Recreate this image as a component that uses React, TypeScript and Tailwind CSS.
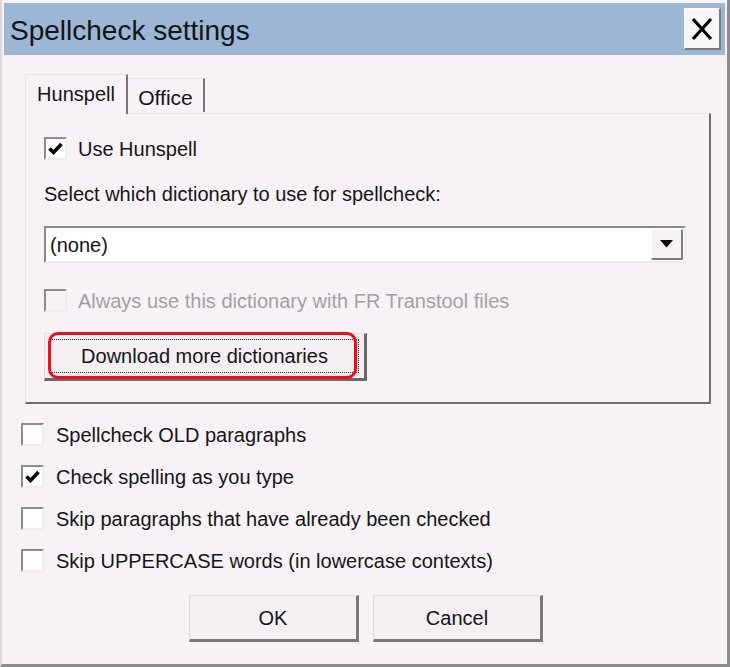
import React from 'react';

const Check: React.FC<{ checked?: boolean; disabled?: boolean }> = ({ checked, disabled }) => (
  <div
    className={`w-[23px] h-[23px] flex items-center justify-center border-2 border-t-[#8c8a8c] border-l-[#8c8a8c] border-b-[#efebef] border-r-[#efebef] ${
      disabled ? 'bg-[#f6f2f6]' : 'bg-white'
    }`}
  >
    {checked && (
      <svg width="15" height="14" viewBox="0 0 15 14">
        <path d="M1.5 6.5 L5.5 10.5 L13.5 2" fill="none" stroke="#000" strokeWidth="3.6" />
      </svg>
    )}
  </div>
);

const Row: React.FC<{ label: string; checked?: boolean; disabled?: boolean; gap: string }> = ({ label, checked, disabled, gap }) => (
  <div className={`flex items-center h-[23px] ${gap}`}>
    <Check checked={checked} disabled={disabled} />
    <span className={disabled ? 'text-[#a3a0a3]' : 'text-[#151515]'}>{label}</span>
  </div>
);

const App: React.FC = () => {
  return (
    <div className="w-[730px] h-[667px] bg-[#f6f2f6] font-['Liberation_Sans',Arial,sans-serif] text-[20px] leading-none text-[#151515] border-l-2 border-l-[#dcd8dc] border-r-[3px] border-r-[#8e8c8e] border-b-[3px] border-b-[#8e8c8e] pt-[3px] px-[2px] flex flex-col">
      {/* title bar */}
      <div className="h-[52px] bg-[#9cb6d5] flex items-center justify-between pl-[6px] pr-[4px]">
        <span className="text-[28px] text-[#141414] pt-[3px]">Spellcheck settings</span>
        <div className="w-[37px] h-[42px] bg-[#f8f6f8] border-t border-l border-t-white border-l-white border-b-2 border-r-2 border-b-[#7d7b7d] border-r-[#7d7b7d] flex items-center justify-center">
          <svg width="22" height="24" viewBox="0 0 22 24">
            <path d="M2 2 L20 22 M20 2 L2 22" stroke="#000" strokeWidth="3.2" />
          </svg>
        </div>
      </div>

      {/* tabs */}
      <div className="ml-[21px] mt-[19px] flex items-end">
        <div className="w-[103px] h-[40px] bg-[#f6f2f6] border-t border-l border-t-[#e6e2e6] border-l-[#e6e2e6] border-r-2 border-r-[#777577] flex items-center justify-center relative z-10 -mb-px">
          <span className="pb-[2px]">Hunspell</span>
        </div>
        <div className="w-[77px] h-[34px] border-t border-t-[#e6e2e6] border-r-2 border-r-[#777577] flex items-center justify-center mb-px">
          <span className="pt-[4px] text-[21px]">Office</span>
        </div>
      </div>

      {/* panel */}
      <div className="ml-[21px] w-[686px] border-t border-l border-t-[#e6e2e6] border-l-[#e6e2e6] border-r-2 border-b-2 border-r-[#6f6d6f] border-b-[#6f6d6f] pl-[18px] pt-[23px] pb-[21px]">
        <Row label="Use Hunspell" checked gap="gap-[11px]" />
        <div className="mt-[23px] h-[22px] flex items-center">Select which dictionary to use for spellcheck:</div>
        <div className="mt-[21px] w-[642px] h-[37px] bg-white border-2 border-t-[#8a888a] border-l-[#8a888a] border-b-[#efebef] border-r-[#efebef] flex items-center justify-between">
          <span className="pl-[4px]">(none)</span>
          <div className="w-[32px] h-[31px] bg-[#f6f2f6] border-t border-l border-t-white border-l-white border-b-2 border-r-2 border-b-[#807e80] border-r-[#807e80] flex items-center justify-center mr-px">
            <svg width="13" height="8" viewBox="0 0 13 8">
              <path d="M0 0 H13 L6.5 7.5 Z" fill="#000" />
            </svg>
          </div>
        </div>
        <div className="mt-[26px]">
          <Row label="Always use this dictionary with FR Transtool files" disabled gap="gap-[11px]" />
        </div>
        <div className="mt-[21px] relative w-[323px] h-[48px] bg-[#f3eff3] border-t border-l border-t-[#e0dce0] border-l-[#e0dce0] border-b-[3px] border-r-[3px] border-b-[#6b696b] border-r-[#6b696b] p-[5px]">
          <div className="w-full h-full border border-dotted border-[#333] flex items-center justify-center">
            <span>Download more dictionaries</span>
          </div>
          <div className="absolute left-[3px] top-[-2px] w-[309px] h-[47px] border-[3px] border-[#e8101c] rounded-[10px]" />
        </div>
      </div>

      {/* lower options */}
      <div className="pl-[17px] mt-[19px] flex flex-col gap-[19px]">
        <Row label="Spellcheck OLD paragraphs" gap="gap-[12px]" />
        <Row label="Check spelling as you type" checked gap="gap-[12px]" />
        <Row label="Skip paragraphs that have already been checked" gap="gap-[12px]" />
        <Row label="Skip UPPERCASE words (in lowercase contexts)" gap="gap-[12px]" />
      </div>

      {/* buttons */}
      <div className="mt-[23px] ml-[185px] flex gap-[14px]">
        <div className="w-[170px] h-[47px] bg-[#f3eff3] border-t border-l border-t-[#e0dce0] border-l-[#e0dce0] border-b-[3px] border-r-[3px] border-b-[#797779] border-r-[#797779] flex items-center justify-center">
          OK
        </div>
        <div className="w-[170px] h-[47px] bg-[#f3eff3] border-t border-l border-t-[#e0dce0] border-l-[#e0dce0] border-b-[3px] border-r-[3px] border-b-[#797779] border-r-[#797779] flex items-center justify-center">
          Cancel
        </div>
      </div>
    </div>
  );
};

export default App;
